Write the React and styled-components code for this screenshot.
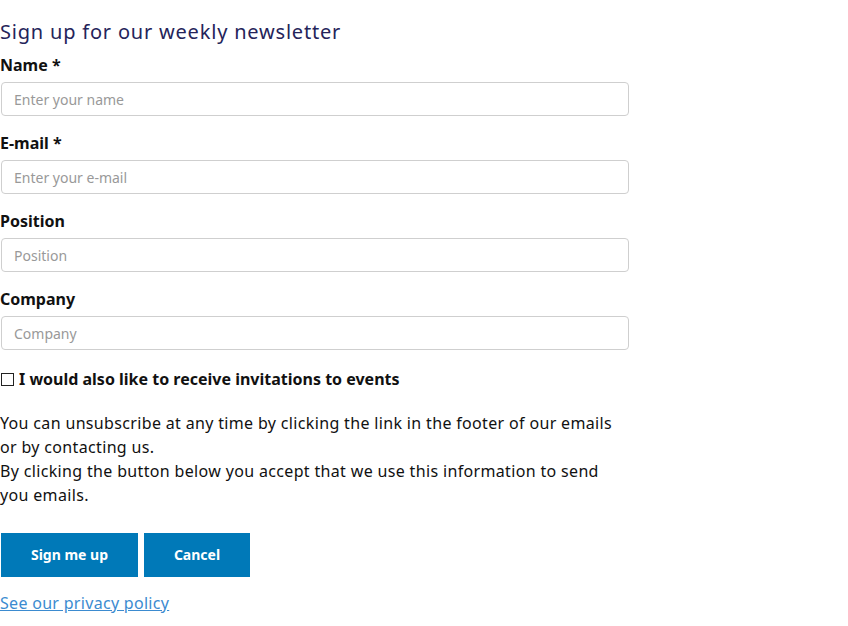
import React from "react";
import styled, { createGlobalStyle } from "styled-components";

const Global = createGlobalStyle`
  html, body { margin: 0; padding: 0; background: #fff; }
  body { font-family: "Noto Sans", "DejaVu Sans", sans-serif; color: #111; }
  * { box-sizing: border-box; }
`;

const Form = styled.form`
  width: 629px;
  padding: 17px 0 0 1px;
  display: flex;
  flex-direction: column;
`;

const Title = styled.h2`
  margin: 0 0 6px -1px;
  font-size: 20px;
  letter-spacing: 0.8px;
  font-weight: 400;
  line-height: 30px;
  color: #25245a;
`;

const Field = styled.div`
  display: flex;
  flex-direction: column;
  margin-bottom: 15px;
`;

const Label = styled.label`
  font-size: 16px;
  font-weight: 700;
  line-height: 24px;
  margin: 0 0 5px -1px;
  color: #111;
`;

const Input = styled.input`
  height: 34px;
  width: 628px;
  border: 1px solid #cfcfcf;
  border-radius: 4px;
  padding: 0 12px;
  font-family: inherit;
  font-size: 14px;
  color: #333;
  &::placeholder { color: #999; }
  outline: none;
`;

const CheckRow = styled.label`
  display: flex;
  align-items: center;
  gap: 5px;
  margin-top: 2px;
  font-size: 16px;
  font-weight: 700;
  line-height: 24px;
`;

const Box = styled.span`
  width: 13px;
  height: 13px;
  border: 1px solid #222;
  display: inline-block;
`;

const Text = styled.p`
  margin: 20px 0 0 -1px;
  font-size: 16px;
  letter-spacing: 0.34px;
  line-height: 24px;
  width: 620px;
`;

const Buttons = styled.div`
  display: flex;
  gap: 6px;
  margin-top: 26px;
`;

const Button = styled.button`
  height: 44px;
  padding: 0 0 2px;
  width: ${(p) => p.$w}px;
  border: none;
  background: #0079b8;
  color: #fff;
  font-family: inherit;
  font-size: 14px;
  font-weight: 700;
`;

const Link = styled.a`
  align-self: flex-start;
  margin-top: 14px;
  font-size: 16px;
  letter-spacing: 0.3px;
  line-height: 24px;
  color: #3b8bd0;
  text-decoration: underline;
  margin-left: -1px;
`;

const fields = [
  ["Name *", "Enter your name"],
  ["E-mail *", "Enter your e-mail"],
  ["Position", "Position"],
  ["Company", "Company"],
];

export default function App() {
  return (
    <>
      <Global />
      <Form onSubmit={(e) => e.preventDefault()}>
        <Title>Sign up for our weekly newsletter</Title>
        {fields.map(([l, p]) => (
          <Field key={l}>
            <Label>{l}</Label>
            <Input placeholder={p} />
          </Field>
        ))}
        <CheckRow>
          <Box />I would also like to receive invitations to events
        </CheckRow>
        <Text>
          You can unsubscribe at any time by clicking the link in the footer of our emails or by contacting us.
          <br />
          By clicking the button below you accept that we use this information to send you emails.
        </Text>
        <Buttons>
          <Button type="button" $w={137}>Sign me up</Button>
          <Button type="button" $w={106}>Cancel</Button>
        </Buttons>
        <Link href="#">See our privacy policy</Link>
      </Form>
    </>
  );
}
